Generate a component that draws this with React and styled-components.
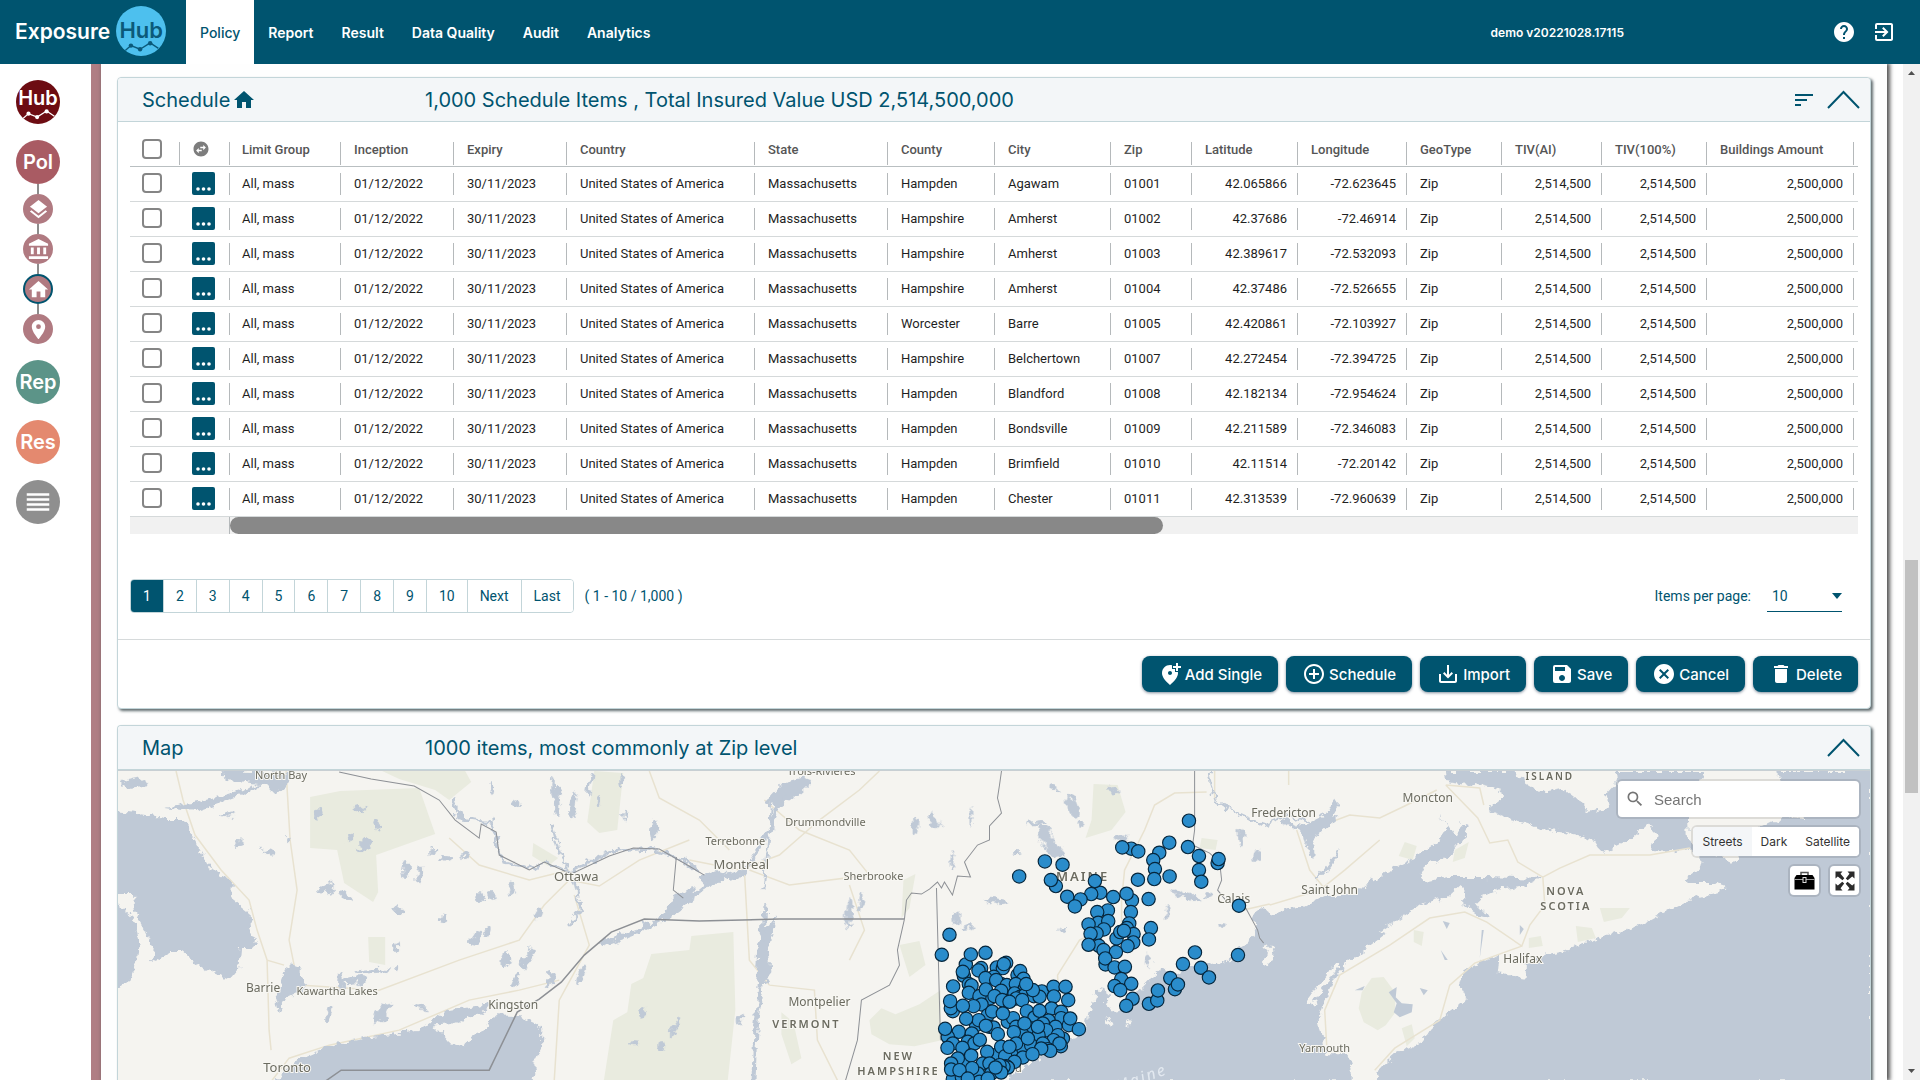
import React from "react";
import styled, { createGlobalStyle, css } from "styled-components";
import {
  MdHelp, MdExitToApp, MdSort, MdHome, MdLayers, MdAccountBalance, MdPlace, MdReorder,
  MdSwapHorizontalCircle, MdAddLocationAlt, MdAddCircleOutline, MdSaveAlt, MdSave, MdCancel,
  MdDelete, MdSearch,
} from "react-icons/md";

const teal = "#00546f";
const line = "#c3d5d9";
const display = `Inter, "Open Sans", sans-serif`;
const body = `Roboto, "Liberation Sans", sans-serif`;

const Global = createGlobalStyle`
  *, *::before, *::after { box-sizing: border-box; }
  body { margin: 0; background: #fff; font-family: ${body}; color: #222; overflow: hidden; }
  button, input, select { font: inherit; color: inherit; margin: 0; }
  button { padding: 0; border: 0; background: none; cursor: pointer; }
`;

const Shell = styled.div`
  display: flex;
  flex-direction: column;
  height: 100vh;
`;

/* Top bar */
const TopBar = styled.header`
  flex: none;
  display: flex;
  align-items: center;
  height: 64px;
  padding-right: 24px;
  background: ${teal};
  color: #fff;
  font-family: ${display};
`;
const Brand = styled.a`
  display: flex;
  align-items: center;
  gap: 6px;
  width: 186px;
  padding: 0 0 2px 15px;
  color: #fff;
  font-size: 21px;
  font-weight: 600;
  text-decoration: none;
`;
const Badge = styled.span`
  flex: none;
  display: flex;
  flex-direction: column;
  align-items: center;
  justify-content: flex-end;
  width: ${(p) => p.$size}px;
  height: ${(p) => p.$size}px;
  border-radius: 50%;
  overflow: hidden;
  background: ${(p) => p.$bg};
  color: ${(p) => p.$fg};
  font-size: ${(p) => (p.$size > 45 ? 22 : 20)}px;
  line-height: 22px;
  font-weight: 600;
  svg { display: block; margin-bottom: 4px; }
`;
const Nav = styled.nav`
  flex: 1;
  display: flex;
  align-self: stretch;
`;
const NavLink = styled.a`
  display: flex;
  align-items: center;
  padding: 0 14px;
  font-size: 14px;
  font-weight: 600;
  text-decoration: none;
  color: ${(p) => (p.$active ? teal : "#fff")};
  background: ${(p) => (p.$active ? "#fff" : "transparent")};
  ${(p) => p.$active && css`font-weight: 500;`}
`;
const Version = styled.span`
  font-size: 12px;
  font-weight: 600;
  margin-right: 208px;
`;
const TopIcons = styled.div`
  display: flex;
  gap: 16px;
`;
const IconButton = styled.button`
  display: flex;
  align-items: center;
  justify-content: center;
  color: inherit;
`;

/* Frame */
const Frame = styled.div`
  flex: 1;
  min-height: 0;
  display: flex;
  overflow: hidden;
`;
const Rail = styled.aside`
  flex: none;
  display: flex;
  flex-direction: column;
  width: 101px;
  padding: 16px 0 0 16px;
  border-right: 10px solid #b07e84;
  font-family: ${display};
`;
const RailItem = styled.button`
  flex: none;
  display: flex;
  align-items: center;
  justify-content: center;
  width: 44px;
  height: 44px;
  margin-bottom: ${(p) => (p.$tight ? 0 : 16)}px;
  border-radius: 50%;
  background: ${(p) => p.$bg};
  color: #fff;
  font-size: 20px;
  font-weight: 600;
`;
const Chain = styled.div`
  display: flex;
  flex-direction: column;
  align-items: center;
  width: 44px;
  margin-bottom: 16px;
`;
const Link = styled.span`
  width: 2px;
  height: 10px;
  background: #8c8c8c;
`;
const Node = styled.button`
  display: flex;
  align-items: center;
  justify-content: center;
  width: 30px;
  height: 30px;
  border-radius: 50%;
  border: 2px solid ${(p) => (p.$current ? teal : "#b07a81")};
  background: #b07a81;
  color: #fff;
  svg { flex: none; }
`;
const Main = styled.main`
  flex: 1;
  min-width: 0;
  display: flex;
  flex-direction: column;
  gap: 16px;
  margin-right: 16px;
  padding: 13px 16px 0;
  background: #fefefe;
  box-shadow: 2px 0 4px 1px #555;
`;
const ScrollTrack = styled.div`
  flex: none;
  display: flex;
  flex-direction: column;
  align-items: center;
  justify-content: space-between;
  width: 17px;
  padding: 6px 0;
  background: #f1f1f1;
`;
const ScrollSpacer = styled.span`
  flex: ${(p) => p.$grow};
`;
const ScrollThumb = styled.span`
  flex: 231;
  width: 13px;
  background: #c1c1c1;
`;

/* Panels */
const Panel = styled.section`
  flex: ${(p) => (p.$fill ? "1 0 300px" : "none")};
  display: flex;
  flex-direction: column;
  border: 1px solid ${line};
  border-radius: 4px ${(p) => (p.$fill ? "4px 0 0" : "4px 4px 4px")};
  border-bottom-width: ${(p) => (p.$fill ? 0 : 1)}px;
  background: #fff;
  box-shadow: 2px 2px 3px #5f6b6e;
`;
const PanelHead = styled.header`
  flex: none;
  display: grid;
  grid-template-columns: 283px 1fr auto;
  align-items: center;
  height: 44px;
  padding: 0 10px 0 24px;
  border-bottom: 1px solid ${line};
  border-radius: 4px 4px 0 0;
  background: #f3f6f8;
  color: ${teal};
  font-family: ${display};
`;
const Title = styled.h2`
  display: flex;
  align-items: center;
  gap: 2px;
  margin: 0;
  font-size: 20px;
  font-weight: 400;
  white-space: nowrap;
`;
const HeadTools = styled.div`
  display: flex;
  align-items: center;
  gap: 11px;
`;
const PanelBody = styled.div`
  padding: 10px 12px 26px;
`;

/* Table */
const Table = styled.table`
  width: 100%;
  table-layout: fixed;
  border-collapse: separate;
  border-spacing: 0;
  font-size: 13px;
`;
const Th = styled.th`
  padding: 10px 0 1px;
  border-bottom: 1px solid #b9bfc1;
  text-align: left;
  font-weight: 500;
  color: #555;
`;
const Td = styled.td`
  padding: 6px 0;
  border-bottom: 1px solid #d5d9da;
  color: #1f1f1f;
`;
const Cell = styled.div`
  display: flex;
  align-items: center;
  height: ${(p) => (p.$head ? 23 : 22)}px;
  padding: 0 10px ${(p) => (p.$head ? 9 : 2)}px ${(p) => (p.$pin ? 12 : 13)}px;
  justify-content: ${(p) => (p.$right ? "flex-end" : "flex-start")};
  border-right: 1px solid ${(p) => (p.$open ? "transparent" : "#b5b9bb")};
  white-space: nowrap;
`;
const Tick = styled.input.attrs({ type: "checkbox" })`
  appearance: none;
  flex: none;
  width: 20px;
  height: 20px;
  border: 2px solid #858585;
  border-radius: 4px;
  background: #fff;
`;
const RowMenu = styled.button`
  flex: none;
  display: flex;
  align-items: flex-end;
  justify-content: center;
  width: 23px;
  height: 23px;
  padding-bottom: 4px;
  border-radius: 2px;
  background: ${teal};
`;
const HScroll = styled.div`
  display: flex;
  height: 17px;
  background: #f1f1f1;
`;
const HPinned = styled.span`
  flex: none;
  width: 100px;
  border-right: 1px solid #b5b9bb;
`;
const HThumb = styled.span`
  width: 54%;
  border-radius: 9px;
  background: #888;
`;

/* Paging */
const Paging = styled.div`
  display: flex;
  align-items: center;
  margin-top: 45px;
  padding-right: 16px;
  color: ${teal};
  font-size: 14px;
`;
const Pages = styled.div`
  display: flex;
  height: 34px;
  border: 1px solid ${line};
  border-radius: 4px;
  overflow: hidden;
`;
const Page = styled.button`
  padding: 0 12px 1px;
  border-right: 1px solid ${line};
  background: ${(p) => (p.$on ? teal : "#fff")};
  color: ${(p) => (p.$on ? "#fff" : teal)};
  &:last-child { border-right: 0; }
`;
const Range = styled.span`
  margin-left: 11px;
  flex: 1;
`;
const PerPage = styled.label`
  display: flex;
  align-items: center;
  gap: 16px;
`;
const SelectBox = styled.span`
  display: flex;
  align-items: center;
  width: 75px;
  border-bottom: 1px solid ${teal};
  svg { flex: none; margin-left: -10px; pointer-events: none; }
`;
const Select = styled.select`
  appearance: none;
  width: 75px;
  height: 30px;
  padding: 0 5px;
  border: 0;
  background: transparent;
  outline: 0;
`;
const Actions = styled.footer`
  display: flex;
  justify-content: flex-end;
  gap: 8px;
  padding: 16px 12px;
  border-top: 1px solid #d6dadb;
`;
const Action = styled.button`
  display: flex;
  align-items: center;
  gap: 3px;
  height: 36px;
  padding: 0 16px;
  border-radius: 8px;
  background: ${teal};
  color: #fff;
  font-family: ${display};
  font-size: 15px;
  font-weight: 500;
  box-shadow: 0 1px 3px rgba(0, 30, 60, 0.5);
`;

/* Map */
const MapArea = styled.div`
  flex: 1;
  position: relative;
  min-height: 0;
  overflow: hidden;
  border-top: 1px solid #c8cfd3;
  background: #bfc9d4;
`;
const MapSvg = styled.svg`
  display: block;
  width: 100%;
  height: 100%;
  font-family: "Noto Sans", sans-serif;
`;
const MapControls = styled.div`
  position: absolute;
  top: 10px;
  right: 11px;
  display: flex;
  flex-direction: column;
  align-items: flex-end;
  gap: 10px;
`;
const Floating = css`
  background: #fff;
  border-radius: 4px;
  box-shadow: 0 0 0 2px rgba(0, 0, 0, 0.1);
`;
const SearchBox = styled.label`
  ${Floating}
  display: flex;
  align-items: center;
  gap: 7px;
  width: 241px;
  height: 36px;
  padding: 0 7px;
  color: #757575;
`;
const SearchInput = styled.input`
  flex: 1;
  min-width: 0;
  border: 0;
  outline: 0;
  background: none;
  font-family: "Liberation Sans", sans-serif;
  font-size: 15px;
  &::placeholder { color: #757575; opacity: 1; }
`;
const Styles = styled.div`
  ${Floating}
  display: flex;
  height: 29px;
  overflow: hidden;
  font-family: ${display};
`;
const StyleButton = styled.button`
  padding: 0 9px;
  background: ${(p) => (p.$on ? "#f4f6f8" : "#fff")};
  color: #333;
  font-size: 12px;
`;
const Tools = styled.div`
  display: flex;
  gap: 11px;
`;
const Tool = styled.button`
  ${Floating}
  display: flex;
  align-items: center;
  justify-content: center;
  width: 29px;
  height: 29px;
`;

const COLUMNS = [
  ["Limit Group", 111], ["Inception", 113], ["Expiry", 113], ["Country", 188], ["State", 133],
  ["County", 107], ["City", 116], ["Zip", 81], ["Latitude", 106, true], ["Longitude", 109, true],
  ["GeoType", 95], ["TIV(AI)", 100, true], ["TIV(100%)", 105, true], ["Buildings Amount", 147, true],
];
const PLACES = [
  ["Hampden", "Agawam", "01001", "42.065866", "-72.623645"],
  ["Hampshire", "Amherst", "01002", "42.37686", "-72.46914"],
  ["Hampshire", "Amherst", "01003", "42.389617", "-72.532093"],
  ["Hampshire", "Amherst", "01004", "42.37486", "-72.526655"],
  ["Worcester", "Barre", "01005", "42.420861", "-72.103927"],
  ["Hampshire", "Belchertown", "01007", "42.272454", "-72.394725"],
  ["Hampden", "Blandford", "01008", "42.182134", "-72.954624"],
  ["Hampden", "Bondsville", "01009", "42.211589", "-72.346083"],
  ["Hampden", "Brimfield", "01010", "42.11514", "-72.20142"],
  ["Hampden", "Chester", "01011", "42.313539", "-72.960639"],
];
const rowOf = (p) => [
  "All, mass", "01/12/2022", "30/11/2023", "United States of America", "Massachusetts",
  ...p, "Zip", "2,514,500", "2,514,500", "2,500,000",
];

const LABELS = [
  ["North Bay", 282, 779, 11], ["Trois-Rivières", 822, 775, 11], ["Drummondville", 826, 826, 11],
  ["Terrebonne", 736, 845, 11], ["Montreal", 742, 869, 13], ["Sherbrooke", 874, 880, 11],
  ["Ottawa", 577, 881, 13], ["Barrie", 264, 992, 12], ["Kawartha Lakes", 338, 995, 11],
  ["Kingston", 514, 1009, 12], ["Toronto", 288, 1072, 13], ["Montpelier", 820, 1006, 12],
  ["Fredericton", 1284, 817, 12], ["Moncton", 1428, 802, 12], ["Calais", 1234, 903, 12],
  ["Saint John", 1330, 894, 12], ["Halifax", 1523, 963, 12], ["Yarmouth", 1325, 1052, 11],
  ["Portland", 1000, 1072, 11],
];
const REGIONS = [
  ["VERMONT", 807, 1028, 11], ["NEW", 899, 1060, 11], ["HAMPSHIRE", 899, 1075, 11],
  ["MAINE", 1083, 881, 13], ["NOVA", 1566, 895, 11], ["SCOTIA", 1566, 910, 11],
  ["ISLAND", 1550, 780, 10],
];

/* Item pins, in a grid three times as fine as the map's own units */
const PINS = `868,122 809,188 865,201 898,228 779,218 761,240 954,249 957,237 766,267 898,270 764,297 810,289 905,305 715,299
695,206 668,202 716,214 436,244 489,254 359,289 469,318 454,300 602,338 586,303 575,342 543,358 503,350 526,379 641,351
697,361 681,341 747,357 694,396 625,391 593,396 596,428 626,423 567,433 613,448 591,460 573,461 689,430 682,444 702,462
651,475 662,456 673,452 754,444 748,478 701,487 684,498 598,497 567,494 612,510 649,516 618,553 617,535 645,562 676,560
665,597 645,618 695,611 662,630 699,656 680,677 748,671 773,661 775,631 812,594 826,627 835,613 850,552 886,517 904,563
928,592 1015,525 1018,377 150,464 127,524 199,553 214,523 258,518 245,564 237,571 193,587 292,562 320,548
310,564 313,552 354,585 362,573 372,596 283,590 258,594 305,612 290,600 208,612 216,616 161,619 208,638 270,655 240,648
259,628 307,632 322,615 349,612 376,625 305,632 345,640 362,650 375,646 403,648 427,634 420,650 462,620 498,620 463,649
506,660 400,630 350,655 285,648 246,673 308,660 222,678 160,693 154,684 152,663 190,677 265,705 278,694 330,665 368,660
382,693 405,712 456,685 420,692 485,695 485,714 230,735 238,720 200,716 270,740 282,742 259,737 325,725 355,735 341,714
350,740 398,745 447,721 430,730 468,740 370,765 343,756 295,762 440,750 417,765 490,775 475,765 462,780 484,798 178,755
217,760 145,770 137,746 205,785 225,790 241,779 160,790 144,803 189,803 200,845 215,826 175,835 155,850 268,830 285,825
263,815 305,800 328,840 338,815 317,828 372,808 350,790 395,795 430,790 445,807 480,790 452,812 425,805 370,832 399,822
345,845 250,850 270,850 320,858 325,862 312,860 300,855 275,880 305,877 288,862 250,895 235,880 160,897 155,868 218,864
187,890 508,735 538,747 512,715 375,730 415,740 310,700 385,775 330,800 180,870 240,905 265,895 205,895 190,575 380,612`
  .split(/\s+/).map((p) => p.split(","));

/* Small lakes: x, y, rx, ry, tilt */
const LAKES = [
  [318, 810, 4, 6, 20], [359, 806, 6, 3, 20], [365, 841, 6, 8, 0], [376, 825, 3, 5, 0], [347, 835, 3, 3, 0],
  [359, 848, 4, 2, 0], [237, 841, 4, 3, 0], [226, 813, 8, 2, -15], [268, 850, 7, 3, 10], [287, 838, 2, 5, 0],
  [322, 888, 9, 3, -40], [345, 893, 7, 3, 30], [330, 886, 3, 8, 30], [397, 907, 6, 3, 30], [405, 868, 3, 8, 0],
  [419, 872, 3, 8, 10], [433, 849, 4, 3, 0], [445, 857, 6, 3, 0], [463, 853, 3, 3, 0], [442, 916, 3, 5, 0],
  [479, 894, 4, 5, 0], [493, 893, 6, 4, 40], [511, 887, 3, 7, 10], [537, 911, 3, 6, 10], [474, 938, 9, 3, -50],
  [487, 929, 3, 5, 20], [505, 957, 4, 9, 20], [528, 955, 4, 11, 35], [550, 976, 4, 7, 20], [581, 972, 3, 10, 25],
  [516, 978, 3, 8, 30], [350, 978, 10, 3, -5], [372, 968, 20, 2, -3], [340, 980, 3, 12, 0], [360, 978, 5, 5, 0],
  [382, 1010, 5, 13, 35], [328, 1010, 3, 9, 20], [420, 1003, 8, 2, 20], [395, 945, 2, 4, 0], [396, 966, 2, 3, 0],
  [551, 787, 2, 11, 0], [556, 799, 4, 15, -5], [572, 803, 4, 14, 10], [589, 782, 2, 12, 15], [598, 798, 2, 6, 10],
  [620, 779, 2, 7, 0], [623, 813, 2, 6, 0], [516, 801, 4, 3, 20], [491, 785, 2, 6, 0], [653, 828, 3, 9, 5],
  [915, 822, 3, 8, 15], [930, 818, 4, 8, -20], [848, 910, 3, 15, 5], [860, 900, 2, 9, 10], [913, 824, 3, 9, 0],
  [642, 1010, 4, 6, 10], [675, 1024, 2, 10, 30], [633, 1041, 6, 2, 0], [660, 1044, 3, 5, 0], [740, 1017, 2, 6, 10],
  [932, 820, 5, 8, -30], [951, 860, 2, 9, 0], [970, 815, 1, 12, 0], [1053, 786, 4, 3, 0], [1070, 805, 5, 12, -20],
  [1080, 822, 4, 5, 0], [1112, 787, 6, 2, 20], [1043, 836, 6, 14, -30], [1036, 821, 10, 2, -10], [1055, 848, 10, 5, 30],
  [1120, 837, 7, 3, -10], [1015, 850, 5, 1, 0], [996, 899, 11, 3, 10], [1060, 929, 4, 3, 0], [1178, 890, 7, 3, 30],
  [1192, 896, 11, 3, 20], [1207, 893, 4, 3, 0], [1166, 910, 2, 6, 0], [1146, 957, 3, 8, 10], [1240, 836, 3, 10, -10],
  [1256, 853, 3, 6, 20], [1222, 924, 4, 3, 0], [965, 926, 8, 2, -10], [955, 915, 2, 8, 0], [1160, 980, 8, 3, 0],
];

const MAINLAND_SEA =
  "M1004 1082 L1022 1068 1060 1046 1085 1030 1090 1012 1097 993 1106 986 1108 1004 1118 1012 1133 1004 1140 990 1152 978 1166 968 1172 976 1188 966 1204 966 1230 960 1237 947 1250 940 1256 926 1252 912 1263 908 1272 914 1288 908 1301 907 1325 895 1353 895 1365 885 1384 873 1408 862 1420 855 1436 843 1442 838 1448 827 1438 813 1450 816 1446 771 1872 771 1872 1082Z";
const NOVA_SCOTIA =
  "M1440 781 L1483 787 1503 792 1503 798 1487 810 1507 818 1527 823 1543 830 1566 833 1594 840 1602 853 1630 840 1651 823 1656 833 1653 852 1669 853 1689 847 1705 863 1687 877 1689 883 1713 883 1726 887 1717 893 1689 900 1669 910 1645 923 1622 930 1594 940 1566 950 1547 955 1527 963 1527 978 1497 973 1499 953 1487 960 1465 970 1460 987 1467 1000 1448 1013 1432 1027 1420 1043 1396 1053 1380 1067 1373 1084 1353 1084 1353 1070 1347 1053 1327 1053 1323 1043 1319 1020 1325 1000 1333 983 1345 967 1362 952 1386 934 1380 932 1400 918 1424 903 1448 897 1460 886 1464 892 1465 906 1480 916 1488 918 1477 903 1483 897 1503 888 1527 885 1540 879 1487 877 1448 877 1426 882 1420 875 1424 867 1448 857 1460 843 1470 826 1462 824 1456 838 1448 826 1437 811Z";

function HubLine({ width, color }) {
  return (
    <svg width={width} height="11" viewBox="0 0 44 12" fill="none" stroke={color} strokeWidth="1.5" aria-hidden="true">
      <path d="M3 12 L11 5 L21 9 L32 2 L41 8" />
      <g fill={color} stroke="none">
        <circle cx="11" cy="5" r="2.4" /><circle cx="21" cy="9" r="2.4" /><circle cx="32" cy="2.4" r="2.4" />
      </g>
    </svg>
  );
}

function Chevron() {
  return (
    <IconButton aria-label="Collapse">
      <svg width="33" height="19" viewBox="0 0 33 19" fill="none" stroke={teal} strokeWidth="2">
        <path d="M1 18 L16.5 2 L32 18" />
      </svg>
    </IconButton>
  );
}

function MapDrawing() {
  return (
    <MapSvg viewBox="119 771 1751 309" preserveAspectRatio="xMinYMin slice" role="img" aria-label="Map of items">
      <defs>
        <filter id="coast" x="0" y="0" width="1" height="1">
          <feTurbulence type="fractalNoise" baseFrequency="0.12" numOctaves="3" seed="4" />
          <feDisplacementMap in="SourceGraphic" scale="11" xChannelSelector="R" yChannelSelector="G" />
        </filter>
      </defs>
      <rect x="119" y="771" width="1751" height="309" fill="#f5f4f0" />
      <g fill="#e9ebdf">
        <path d="M311 797 L341 791 420 788 436 834 377 855 379 892 374 902 345 883 338 850 311 848Z" />
        <path d="M383 771 H466 L472 782 450 800 436 790 400 779Z" />
        <path d="M595 771 L624 773 618 830 600 833 588 822Z" />
        <path d="M692 936 L734 932 736 1010 728 1084 604 1084 614 1020 628 1012 632 984 644 978 652 954 690 950Z" />
        <path d="M369 937 h17 v28 l-16 -3Z M534 843 l25 15 -10 8 -16 -10Z M782 1012 l12 10 8 36 -10 6 -10 -30Z" />
        <path d="M870 1020 L882 1008 896 1014 920 1004 941 990 942 1040 915 1046 890 1044 872 1034Z M904 880 l12 -6 -6 34 -8 10Z M900 945 l20 -4 6 24 -16 12Z" />
        <path d="M1094 784 L1118 785 1126 812 1112 830 1086 838 1092 820Z M1202 838 l16 2 -2 10 -16 -2Z" />
        <path d="M1405 842 l12 4 -4 14 -14 -4Z" />
      </g>
      <g fill="none" stroke="#e8e2d0" strokeWidth="1.5">
        <path d="M177 771 L184 800 196 835 222 870 250 900 258 930 268 960 285 965 M287 771 L291 840 298 890 290 940 295 965 M268 960 L270 1030 272 1050 M270 1084 L290 1058 330 1045 400 1030 470 1000 520 990 560 980" />
        <path d="M300 985 L380 990 460 960 520 940 545 905 570 880 600 886 640 860 690 840 M450 838 L480 865 530 880 570 870 M575 895 L590 945 560 1000 555 1080" />
        <path d="M690 860 L740 870 780 855 820 820 860 790 880 771 M765 800 L800 830 850 850 870 875 790 885 750 870 M745 870 L750 960 770 985 M850 885 L865 930 850 960 M770 985 L815 990 818 1040 840 1084 M650 771 L660 798 700 820 730 850" />
        <path d="M1207 792 L1175 793 1155 805 1145 830 1125 870 1122 900 1122 930 M1215 771 V800 M1060 1010 L1058 975 1080 940 1100 930 M1289 771 V785 M1297 830 L1310 870 1330 895 M1270 905 L1320 890 1345 870 1380 840 M1235 912 L1270 904 M1310 830 L1350 815 1380 818 1405 806 1437 790" />
      </g>
      <g fill="#bfc9d6" filter="url(#coast)">
        <path d="M112 812 L140 814 165 818 183 818 195 838 205 858 211 870 233 880 232 896 250 910 252 928 258 942 252 948 242 948 240 970 232 980 208 970 190 958 182 951 172 951 152 964 154 948 146 930 136 912 134 894 112 894Z" />
        <path d="M112 898 L134 917 140 940 138 962 131 980 112 994Z" />
        <path d="M272 1084 L300 1058 330 1045 375 1037 415 1030 434 1023 450 1042 462 1046 484 1030 496 1015 520 1016 542 1026 542 1048 534 1064 536 1084Z" />
        <path d="M425 1026 L450 1010 495 1003 480 1014 450 1024Z" />
        <path d="M288 965 L300 967 306 984 298 994 286 1000 280 1012 276 995 282 982Z" />
        <path d="M230 780 L220 771 292 773 289 785 277 796 266 785Z M165 808 L200 802 240 790 262 783 256 790 225 802 196 812Z M122 782 l24 -4 4 6 -20 3Z" />
        <path d="M806 778 L816 780 800 794 780 806 768 800 782 784Z" />
        <path d="M700 876 l18 -6 10 2 -16 16Z M660 920 L672 900 694 886 696 894 684 906 668 920Z" />
        <path d="M762 935 L778 915 770 945 772 970 766 985 756 980 758 950Z" />
        <path d="M1284 818 l20 8 20 -10 12 -18 4 6 -8 14 8 -2 -14 12 -14 10 4 14 -4 8 -6 -22 -8 -10 -16 -4Z M1315 880 l24 -30 -2 8 -20 24Z" />
      </g>
      <g fill="#bfc9d6" filter="url(#coast)">
        {LAKES.map(([x, y, rx, ry, t], i) => (
          <ellipse key={i} cx={x + 2} cy={y + 2} rx={rx} ry={ry} transform={`rotate(${t} ${x} ${y})`} />
        ))}
      </g>
      <g fill="none" stroke="#bfc9d6" strokeLinejoin="round" filter="url(#coast)">
        <path strokeWidth="5" d="M800 790 L778 806 770 830 758 850 745 872 715 880 690 900 665 918 640 930 600 945" />
        <path strokeWidth="4" d="M764 975 L760 1000 756 1030 754 1084 M766 905 L764 940" />
        <path strokeWidth="3" d="M453 797 L460 818 492 822 500 850 505 862 530 868 548 862 570 872 610 852 650 848 680 858 700 872 M575 880 L582 910 570 925" />
        <path strokeWidth="2" d="M772 800 L768 850 764 890 M552 825 L562 860 570 870 M1210 771 L1215 800 1235 812 1265 825 1290 815 1310 822" />
      </g>
      <path d={MAINLAND_SEA} fill="#bfc9d6" filter="url(#coast)" />
      <g fill="#f5f4f0" filter="url(#coast)">
        <path d={NOVA_SCOTIA} />
        <path d="M1505 765 L1523 780 1543 792 1562 788 1582 803 1590 812 1610 808 1606 793 1618 780 1616 765Z" />
        <path d="M1706 765 L1700 785 1687 815 1688 840 1702 850 1722 857 1735 862 1742 850 1752 832 1782 817 1806 818 1794 805 1778 775 1776 765Z" />
        <path d="M1268 944 l8 8 -8 14 -4 -2Z M1306 1003 l32 -42 4 2 -30 42Z M1305 1004 l10 -14 2 2Z M1106 1015 l6 8 -4 2Z M1128 1018 l4 8 -5 0Z" />
      </g>
      <g fill="#e9ebdf">
        <path d="M1372 978 l12 -1 12 16 -1 20 -9 12 -8 5 -14 -8 -5 -14 3 -16Z M1576 926 l16 2 4 10 -18 4Z M1600 908 l30 0 -8 10 -18 4Z M1529 938 l12 -2 2 10 -14 2Z M1455 850 l14 -8 -4 16 -12 4Z M1414 930 l10 2 -2 14 -8 -4Z M1402 1028 l10 -4 3 14 -8 8Z" />
      </g>
      <g fill="#bfc9d6">
        <path d="M1389 992 l8 -5 -1 10 6 6 11 1 -1 8 -12 5 -6 -5 3 -9Z M1420 988 l8 2 -4 5Z M1443 921 l7 2 -3 6Z M1441 950 l7 10 -3 0Z M1482 930 l2 0 -4 28Z M1355 990 l10 -4 -2 4Z M1520 925 l4 4 -4 6Z" />
      </g>
      <g fill="none" stroke="#e8e2d0" strokeWidth="1.5">
        <path d="M1446 785 L1478 818 1490 843 1508 840 1518 862 1543 877 1560 868 1590 855 1650 855 1690 848 M1543 877 L1545 905 1530 925 1522 946 1487 922 1465 912 1430 918 1390 945 1340 975 1325 1010 1327 1045 M1522 946 L1475 963 1450 985 1440 1020 1395 1048 1375 1070 M1446 785 L1480 788 1484 805" />
      </g>
      <g fill="none" stroke="#8d9095" strokeWidth="1">
        <path d="M340 772 L372 779 415 786 440 800 456 820 480 838 482 824 497 832 500 855 530 870 545 862 572 874 610 856 634 848 660 849 688 865 705 875" />
        <path strokeWidth="1.5" d="M322 1084 L342 1070 490 1070 518 1012 540 999 562 982 585 955 612 932 645 919 700 921 780 919 905 919" />
        <path d="M905 919 L907 900 912 893 922 894 930 889 938 882 942 888 945 882 953 895 958 876 971 877 965 862 978 845 990 840 990 826 1002 813 998 798 1000 785 1002 771" />
        <path d="M905 919 L898 950 900 965 890 985 862 1000 858 1040 845 1084 M937 888 L941 1040 M677 857 L674 890 684 898" />
        <path d="M1195 771 V830 L1193 845 1210 853 1220 862 1222 880 1218 890 1226 900 M1245 906 L1258 930 1260 938 1264 943" />
      </g>
      <g fill="#6b6b60" stroke="#f8f7f3" strokeWidth="2" paintOrder="stroke" textAnchor="middle">
        {LABELS.map(([t, x, y, s]) => (
          <text key={t} x={x} y={y} fontSize={s}>{t}</text>
        ))}
        {REGIONS.map(([t, x, y, s]) => (
          <text key={t} x={x} y={y} fontSize={s} fontWeight="600" letterSpacing="2">{t}</text>
        ))}
      </g>
      <text x="1118" y="1092" fontSize="16" fontStyle="italic" letterSpacing="2" fill="#e3e9f0" transform="rotate(-20 1118 1092)">Maine</text>
      <g transform="translate(900 780) scale(0.33333)" fill="#2a8ccb" stroke="#06263c" strokeWidth="3.5">
        {PINS.map(([x, y], i) => (
          <circle key={i} cx={x} cy={y} r="20" />
        ))}
      </g>
    </MapSvg>
  );
}

const ACTIONS = [
  ["Add Single", MdAddLocationAlt], ["Schedule", MdAddCircleOutline], ["Import", MdSaveAlt],
  ["Save", MdSave], ["Cancel", MdCancel], ["Delete", MdDelete],
];

export default function App() {
  return (
    <Shell>
      <Global />
      <TopBar>
        <Brand href="#">
          Exposure
          <Badge $size={50} $bg="#4dc0ee" $fg="#0b5a7a">Hub<HubLine width={44} color="#0b5a7a" /></Badge>
        </Brand>
        <Nav>
          {["Policy", "Report", "Result", "Data Quality", "Audit", "Analytics"].map((n, i) => (
            <NavLink key={n} href="#" $active={i === 0}>{n}</NavLink>
          ))}
        </Nav>
        <Version>demo v20221028.17115</Version>
        <TopIcons>
          <IconButton aria-label="Help"><MdHelp size={24} /></IconButton>
          <IconButton aria-label="Sign out"><MdExitToApp size={24} /></IconButton>
        </TopIcons>
      </TopBar>
      <Frame>
        <Rail>
          <RailItem $bg="none" aria-label="Hub">
            <Badge $size={44} $bg="#6d0c12" $fg="#fff">Hub<HubLine width={38} color="#fff" /></Badge>
          </RailItem>
          <RailItem $bg="#a95b63" $tight>Pol</RailItem>
          <Chain>
            {[[MdLayers, "Layers"], [MdAccountBalance, "Accounts"], [MdHome, "Schedule"], [MdPlace, "Map"]].map(([Icon, label]) => (
              <React.Fragment key={label}>
                <Link />
                <Node aria-label={label} $current={label === "Schedule"}><Icon size={23} /></Node>
              </React.Fragment>
            ))}
          </Chain>
          <RailItem $bg="#5c9488">Rep</RailItem>
          <RailItem $bg="#e4896f">Res</RailItem>
          <RailItem $bg="#8f8f8f" aria-label="Menu"><MdReorder size={30} /></RailItem>
        </Rail>
        <Main>
          <Panel>
            <PanelHead>
              <Title>Schedule<MdHome size={24} /></Title>
              <Title as="p">1,000 Schedule Items , Total Insured Value USD 2,514,500,000</Title>
              <HeadTools>
                <IconButton aria-label="Sort"><MdSort size={24} /></IconButton>
                <Chevron />
              </HeadTools>
            </PanelHead>
            <PanelBody>
              <Table>
                <colgroup>
                  <col style={{ width: 50 }} /><col style={{ width: 50 }} />
                  {COLUMNS.map(([n, w]) => <col key={n} style={{ width: w }} />)}
                  <col />
                </colgroup>
                <thead>
                  <tr>
                    <Th><Cell $head $pin><Tick aria-label="Select all" /></Cell></Th>
                    <Th><Cell $head $pin><MdSwapHorizontalCircle size={18} color="#7d7d7d" /></Cell></Th>
                    {COLUMNS.map(([n], i) => <Th key={n}><Cell $head $pin={i === 0}>{n}</Cell></Th>)}
                    <Th />
                  </tr>
                </thead>
                <tbody>
                  {PLACES.map((p) => (
                    <tr key={p[2]}>
                      <Td><Cell $open $pin><Tick aria-label={`Select ${p[2]}`} /></Cell></Td>
                      <Td>
                        <Cell $pin>
                          <RowMenu aria-label="Row actions">
                            <svg width="15" height="4" viewBox="0 0 15 4" fill="#fff">
                              <circle cx="2" cy="2" r="1.8" /><circle cx="7.5" cy="2" r="1.8" /><circle cx="13" cy="2" r="1.8" />
                            </svg>
                          </RowMenu>
                        </Cell>
                      </Td>
                      {rowOf(p).map((v, i) => (
                        <Td key={i}><Cell $pin={i === 0} $right={COLUMNS[i][2]}>{v}</Cell></Td>
                      ))}
                      <Td />
                    </tr>
                  ))}
                </tbody>
              </Table>
              <HScroll><HPinned /><HThumb /></HScroll>
              <Paging>
                <Pages>
                  {["1", "2", "3", "4", "5", "6", "7", "8", "9", "10", "Next", "Last"].map((n, i) => (
                    <Page key={n} $on={i === 0}>{n}</Page>
                  ))}
                </Pages>
                <Range>( 1 - 10 / 1,000 )</Range>
                <PerPage>
                  Items per page:
                  <SelectBox>
                    <Select defaultValue="10"><option>10</option><option>20</option><option>50</option></Select>
                    <svg width="10" height="6" viewBox="0 0 10 6" fill={teal}><path d="M0 0 H10 L5 6Z" /></svg>
                  </SelectBox>
                </PerPage>
              </Paging>
            </PanelBody>
            <Actions>
              {ACTIONS.map(([label, Icon]) => (
                <Action key={label}><Icon size={24} />{label}</Action>
              ))}
            </Actions>
          </Panel>
          <Panel $fill>
            <PanelHead>
              <Title>Map</Title>
              <Title as="p">1000 items, most commonly at Zip level</Title>
              <HeadTools><Chevron /></HeadTools>
            </PanelHead>
            <MapArea>
              <MapDrawing />
              <MapControls>
                <SearchBox>
                  <MdSearch size={20} />
                  <SearchInput placeholder="Search" aria-label="Search" />
                </SearchBox>
                <Styles>
                  <StyleButton $on>Streets</StyleButton>
                  <StyleButton>Dark</StyleButton>
                  <StyleButton>Satellite</StyleButton>
                </Styles>
                <Tools>
                  <Tool aria-label="Toolbox">
                    <svg width="21" height="19" viewBox="0 0 21 19">
                      <path d="M7 4 V1.5 H14 V4" fill="none" stroke="#555" strokeWidth="1.5" />
                      <path d="M2.5 4 H18.5 L20.5 7 V18.5 H0.5 V7Z" fill="#000" />
                      <path d="M0.5 8.5 H20.5" stroke="#999" strokeWidth="1" />
                      <rect x="9" y="6.5" width="3" height="5" fill="#000" stroke="#ddd" />
                    </svg>
                  </Tool>
                  <Tool aria-label="Full screen">
                    <svg width="20" height="20" viewBox="0 0 20 20" fill="#2b2b2b">
                      <path id="corner" d="M0.5 0.5 H7.5 L5.5 2.8 L9.3 7.3 L7.5 9.2 L2.8 5.5 L0.5 7.5Z" />
                      <use href="#corner" transform="rotate(90 10 10)" />
                      <use href="#corner" transform="rotate(180 10 10)" />
                      <use href="#corner" transform="rotate(270 10 10)" />
                    </svg>
                  </Tool>
                </Tools>
              </MapControls>
            </MapArea>
          </Panel>
        </Main>
        <ScrollTrack aria-hidden="true">
          <svg width="7" height="5" viewBox="0 0 7 5" fill="#505050"><path d="M0 5 L3.5 1 L7 5Z" /></svg>
          <ScrollSpacer $grow={483} />
          <ScrollThumb />
          <ScrollSpacer $grow={275} />
          <svg width="7" height="5" viewBox="0 0 7 5" fill="#505050"><path d="M0 0 L3.5 4 L7 0Z" /></svg>
        </ScrollTrack>
      </Frame>
    </Shell>
  );
}
